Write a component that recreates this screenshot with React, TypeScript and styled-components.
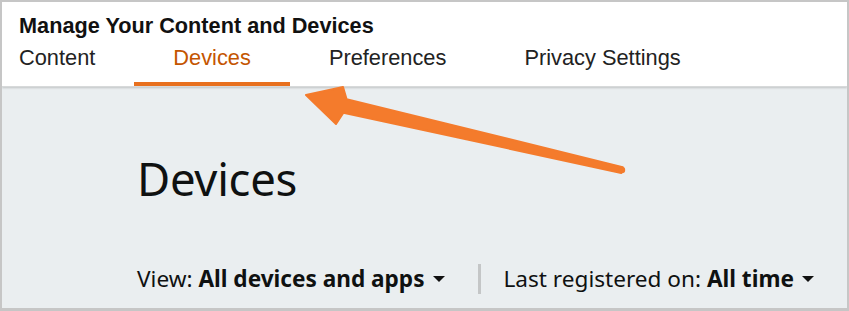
import styled, { createGlobalStyle } from "styled-components";

const GlobalStyle = createGlobalStyle`
  html, body {
    margin: 0;
    padding: 0;
    background: #ffffff;
  }
  * { box-sizing: border-box; }
`;

const Frame = styled.div`
  position: relative;
  width: 849px;
  height: 311px;
  border: 2px solid #c6c6c6;
  border-bottom-width: 3px;
  background: #eaeef0;
  overflow: hidden;
  display: flex;
  flex-direction: column;
`;

const Header = styled.header`
  background: #ffffff;
  padding: 12px 0 0 17px;
  box-shadow: 0 1px 2px rgba(0, 0, 0, 0.18);
  border-bottom: 1px solid #d7d9da;
`;

const Title = styled.h1`
  margin: 0;
  font-family: "Liberation Sans", Arial, sans-serif;
  font-weight: 700;
  font-size: 21.7px;
  line-height: 24px;
  color: #111111;
`;

const Tabs = styled.nav`
  display: flex;
  margin-top: 7px;
`;

const Tab = styled.div<{ $active?: boolean }>`
  font-family: "Liberation Sans", Arial, sans-serif;
  font-size: 21.8px;
  line-height: 26px;
  padding: 0 39px 11px;
  color: ${(p) => (p.$active ? "#c45500" : "#222222")};
  border-bottom: 4px solid ${(p) => (p.$active ? "#e8701e" : "transparent")};

  &:first-child {
    padding-left: 0;
  }
`;

const Main = styled.main`
  flex: 1;
  padding: 61px 0 0 135px;
  font-family: "Noto Sans", "Open Sans", sans-serif;
  color: #0f1111;
`;

const Heading = styled.h2`
  margin: 0;
  font-size: 45.5px;
  font-weight: 400;
  line-height: 60px;
  letter-spacing: -0.3px;
`;

const Filters = styled.div`
  display: flex;
  align-items: center;
  margin-top: 55px;
  font-size: 22.6px;
`;

const Filter = styled.div`
  display: flex;
  align-items: center;
  gap: 7px;
  b { font-weight: 700; }
`;

const Caret = styled.span`
  width: 0;
  height: 0;
  margin-left: 1px;
  border-left: 6px solid transparent;
  border-right: 6px solid transparent;
  border-top: 6px solid #111111;
`;

const Divider = styled.span`
  width: 3px;
  height: 30px;
  background: #c4c6c7;
  margin: 0 23px 0 33px;
`;

const ArrowLayer = styled.svg`
  position: absolute;
  left: -2px;
  top: -2px;
  width: 849px;
  height: 311px;
  pointer-events: none;
`;

export default function App() {
  const tabs = ["Content", "Devices", "Preferences", "Privacy Settings"];
  return (
    <>
      <GlobalStyle />
      <Frame>
        <Header>
          <Title>Manage Your Content and Devices</Title>
          <Tabs>
            {tabs.map((t) => (
              <Tab key={t} $active={t === "Devices"}>
                {t}
              </Tab>
            ))}
          </Tabs>
        </Header>
        <Main>
          <Heading>Devices</Heading>
          <Filters>
            <Filter>
              <span>
                View: <b>All devices and apps</b>
              </span>
              <Caret />
            </Filter>
            <Divider />
            <Filter>
              <span>
                Last registered on: <b>All time</b>
              </span>
              <Caret />
            </Filter>
          </Filters>
        </Main>
        <ArrowLayer viewBox="0 0 849 311">
          <path
            d="M622.7 167.1 L346.6 99.2 L343 87 L306 95 L336 124 L343.4 112.8 L621.3 172.9 Z"
            fill="#f47b2c"
            stroke="#f47b2c"
            strokeWidth="2"
            strokeLinejoin="round"
          />
          <circle cx="622" cy="170" r="3.2" fill="#f47b2c" />
        </ArrowLayer>
      </Frame>
    </>
  );
}
